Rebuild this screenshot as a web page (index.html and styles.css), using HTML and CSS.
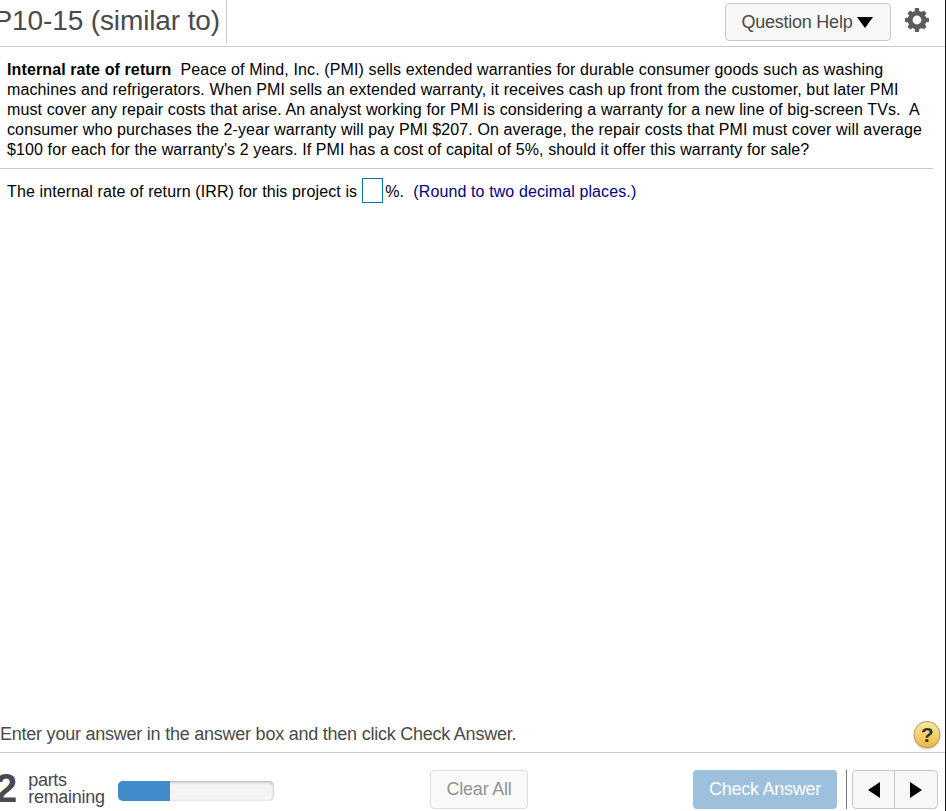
FILE: index.html
```
<!DOCTYPE html>
<html lang="en">
<head>
    <meta charset="UTF-8">
    <meta name="viewport" content="width=device-width, initial-scale=1.0">
    <title>P10-15 (similar to)</title>
    <link rel="stylesheet" href="styles.css">
</head>
<body>
    <div class="player">
        <header class="header">
            <h1 class="title">P10-15 (similar to)</h1>
            <div class="tools">
                <button class="btn help-btn">Question Help
                    <svg width="16" height="11" viewBox="0 0 16 11"><path d="M0 0h16L8 11z"/></svg>
                </button>
                <svg class="gear" width="24" height="24" viewBox="0 0 24 24">
                    <g fill="#5c5c5c">
                        <rect x="9.8" y="0" width="4.4" height="24" rx="1"/>
                        <rect x="9.8" y="0.5" width="4.4" height="23" rx="1" transform="rotate(45 12 12)"/>
                        <rect x="9.8" y="0" width="4.4" height="24" rx="1" transform="rotate(90 12 12)"/>
                        <rect x="9.8" y="0.5" width="4.4" height="23" rx="1" transform="rotate(135 12 12)"/>
                        <circle cx="12" cy="12" r="9.3"/>
                    </g>
                    <circle cx="12" cy="12" r="4.4" fill="#fff"/>
                </svg>
            </div>
        </header>

        <main class="question">
            <p class="problem"><b>Internal rate of return</b>&nbsp; Peace of Mind, Inc. (PMI) sells extended warranties for durable consumer goods such as washing<br>
            machines and refrigerators. When PMI sells an extended warranty, it receives cash up front from the customer, but later PMI<br>
            must cover any repair costs that arise. An analyst working for PMI is considering a warranty for a new line of big-screen TVs.&nbsp; A<br>
            consumer who purchases the 2-year warranty will pay PMI $207. On average, the repair costs that PMI must cover will average<br>
            $100 for each for the warranty's 2 years. If PMI has a cost of capital of 5%, should it offer this warranty for sale?</p>
            <div class="answer">
                <span class="answer-text">The internal rate of return (IRR) for this project is</span>
                <input class="answer-box" type="text">
                <span class="answer-text">%.&nbsp; <span class="hint">(Round to two decimal places.)</span></span>
            </div>
        </main>

        <div class="instructions">
            <span>Enter your answer in the answer box and then click Check Answer.</span>
            <svg class="info" width="28" height="30" viewBox="0 0 28 30">
                <defs>
                    <linearGradient id="gold" x1="0" y1="0" x2="0" y2="1">
                        <stop offset="0" stop-color="#ffe9a0"/>
                        <stop offset="1" stop-color="#f3b73c"/>
                    </linearGradient>
                </defs>
                <ellipse cx="14" cy="15.6" rx="13.5" ry="14" fill="#d8d0bd"/>
                <circle cx="14" cy="14.5" r="13" fill="url(#gold)" stroke="#b5986a"/>
                <text x="14" y="21.5" text-anchor="middle">?</text>
            </svg>
        </div>

        <footer class="footer">
            <div class="parts">
                <span class="count">2</span>
                <span class="label">parts<br>remaining</span>
            </div>
            <div class="progress"><div class="bar"></div></div>
            <button class="btn clear-btn">Clear All</button>
            <button class="check-btn">Check Answer</button>
            <div class="nav">
                <button class="btn prev"><svg width="12" height="16" viewBox="0 0 12 16"><path d="M12 0v16L0 8z"/></svg></button>
                <button class="btn next"><svg width="12" height="16" viewBox="0 0 12 16"><path d="M0 0v16l12-8z"/></svg></button>
            </div>
        </footer>
    </div>
</body>
</html>
```
FILE: styles.css
```
* {
    box-sizing: border-box;
}
body {
    margin: 0;
    overflow: hidden;
    font-family: "Liberation Sans", Arial, sans-serif;
    color: #4a4a4a;
    background: white;
}
button {
    font-family: inherit;
    font-size: 18px;
    letter-spacing: -0.25px;
    padding: 0;
}
.player {
    display: flex;
    flex-direction: column;
    width: 946px;
    height: 811px;
    border-right: 1px solid #111;
}
.header {
    display: flex;
    justify-content: space-between;
    height: 47px;
    border-bottom: 1px solid #c5cad9;
}
.title {
    display: flex;
    align-items: center;
    justify-content: flex-end;
    width: 227px;
    height: 44px;
    margin: 0;
    padding: 0 6px 3px 0;
    border-right: 1px solid #c5cad9;
    font-size: 28px;
    font-weight: normal;
    letter-spacing: -0.12px;
    white-space: nowrap;
}
.tools {
    display: flex;
    align-items: flex-start;
    padding: 3px 16px 0 0;
}
.btn {
    display: flex;
    align-items: center;
    justify-content: center;
    border: 1px solid #c8c8c8;
    border-radius: 4px;
    background-color: #f7f7f7;
    color: #4a4a4a;
}
.help-btn {
    gap: 5px;
    width: 166px;
    height: 38px;
    padding-right: 1px;
}
.gear {
    margin: 5px 0 0 14px;
}
.question {
    flex: 1;
    padding-top: 13px;
    font-size: 16px;
    line-height: 20px;
    letter-spacing: 0.115px;
    color: black;
    white-space: nowrap;
}
.problem {
    width: 933px;
    margin: 0;
    padding: 0 0 8px 7px;
    border-bottom: 1px solid #c5cad9;
}
.answer {
    display: flex;
    align-items: center;
    padding: 9px 0 0 7px;
}
.answer-text {
    padding-top: 2px;
}
.answer-box {
    width: 21px;
    height: 25px;
    margin: 0 2px 0 5px;
    padding: 0;
    border: 1px solid #00789c;
}
.hint {
    color: #000080;
}
.instructions {
    display: flex;
    align-items: center;
    justify-content: space-between;
    height: 35px;
    padding-right: 4px;
    border-bottom: 1px solid #c5cad9;
    font-size: 18px;
    letter-spacing: -0.235px;
}
.instructions span {
    padding-bottom: 2px;
}
.info text {
    font-size: 21px;
    font-weight: bold;
    fill: #333;
}
.footer {
    display: flex;
    align-items: flex-start;
    height: 58px;
    padding-top: 17px;
}
.parts {
    display: flex;
    width: 118px;
}
.count {
    margin-left: -5px;
    font-size: 40px;
    font-weight: bold;
    line-height: 37px;
}
.label {
    margin: 2px 0 0 11px;
    font-size: 18px;
    line-height: 17px;
    letter-spacing: -0.3px;
}
.progress {
    width: 156px;
    height: 20px;
    margin-top: 11px;
    border-radius: 5px;
    overflow: hidden;
    background-color: #f4f4f4;
    box-shadow: inset 0 1px 3px #aaa;
}
.bar {
    width: 52px;
    height: 100%;
    background-color: #428bca;
}
.clear-btn {
    width: 98px;
    height: 39px;
    margin-left: 156px;
    border-color: #dedede;
    background-color: #fafafa;
    color: #929292;
}
.check-btn {
    width: 144px;
    height: 39px;
    margin-left: 165px;
    border: none;
    border-radius: 4px;
    background-color: #9dc0dc;
    color: white;
}
.nav {
    display: flex;
    height: 39px;
    margin-left: 9px;
    padding-left: 5px;
    border-left: 1px solid #777;
}
.nav .btn {
    width: 43px;
    height: 39px;
}
.nav .prev {
    border-radius: 4px 0 0 4px;
}
.nav .next {
    width: 44px;
    margin-left: -1px;
    border-radius: 0 4px 4px 0;
}
```
